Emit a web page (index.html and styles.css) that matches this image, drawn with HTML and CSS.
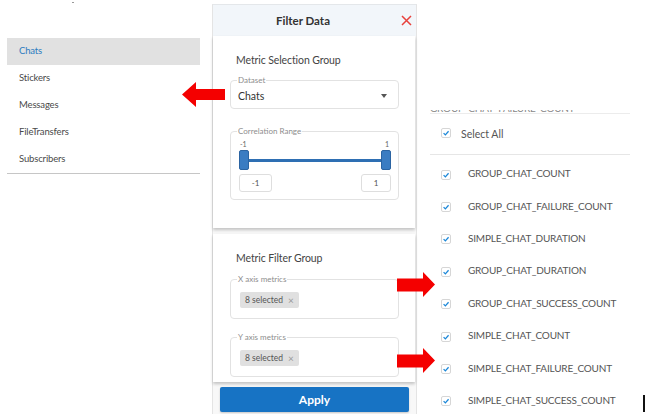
FILE: index.html
```html
<!DOCTYPE html>
<html>
<head>
<meta charset="utf-8">
<link rel="stylesheet" href="styles.css">
</head>
<body>
<div class="page">
  <nav class="menu">
    <div class="menu-item active">Chats</div>
    <div class="menu-item">Stickers</div>
    <div class="menu-item">Messages</div>
    <div class="menu-item">FileTransfers</div>
    <div class="menu-item">Subscribers</div>
  </nav>

  <section class="panel">
    <header class="panel-head">
      <span class="panel-title">Filter Data</span>
      <svg class="close" viewBox="0 0 11 11"><path d="M1 1L10 10M10 1L1 10" stroke="#e8413c" stroke-width="1.5" fill="none"/></svg>
    </header>

    <div class="card card-selection">
      <div class="card-title">Metric Selection Group</div>
      <fieldset class="field">
        <legend>Dataset</legend>
        <div class="select"><span>Chats</span><span class="caret"></span></div>
      </fieldset>
      <fieldset class="field field-range">
        <legend>Correlation Range</legend>
        <div class="range-body">
          <div class="range-labels"><span>-1</span><span>1</span></div>
          <div class="slider"><span class="handle"></span><span class="track"></span><span class="handle"></span></div>
          <div class="range-values"><span class="val val-min">-1</span><span class="val val-max">1</span></div>
        </div>
      </fieldset>
    </div>

    <div class="card card-filter">
      <div class="card-title">Metric Filter Group</div>
      <fieldset class="field field-chips">
        <legend>X axis metrics</legend>
        <span class="chip">8 selected <span class="chip-x">×</span></span>
      </fieldset>
      <fieldset class="field field-chips field-y">
        <legend>Y axis metrics</legend>
        <span class="chip">8 selected <span class="chip-x">×</span></span>
      </fieldset>
    </div>

    <button class="apply">Apply</button>
  </section>

  <section class="checklist">
    <div class="clip"><span>GROUP_CHAT_FAILURE_COUNT</span></div>
    <div class="select-all">
      <span class="cb"><svg viewBox="0 0 10 10"><path d="M2 5.2L4.2 7.3L8.2 2.8" stroke="#1b87d8" stroke-width="1.6" fill="none"/></svg></span>
      <span>Select All</span>
    </div>
    <ul class="items">
      <li><span class="cb"><svg viewBox="0 0 10 10"><path d="M2 5.2L4.2 7.3L8.2 2.8" stroke="#1b87d8" stroke-width="1.6" fill="none"/></svg></span>GROUP_CHAT_COUNT</li>
      <li><span class="cb"><svg viewBox="0 0 10 10"><path d="M2 5.2L4.2 7.3L8.2 2.8" stroke="#1b87d8" stroke-width="1.6" fill="none"/></svg></span>GROUP_CHAT_FAILURE_COUNT</li>
      <li><span class="cb"><svg viewBox="0 0 10 10"><path d="M2 5.2L4.2 7.3L8.2 2.8" stroke="#1b87d8" stroke-width="1.6" fill="none"/></svg></span>SIMPLE_CHAT_DURATION</li>
      <li><span class="cb"><svg viewBox="0 0 10 10"><path d="M2 5.2L4.2 7.3L8.2 2.8" stroke="#1b87d8" stroke-width="1.6" fill="none"/></svg></span>GROUP_CHAT_DURATION</li>
      <li><span class="cb"><svg viewBox="0 0 10 10"><path d="M2 5.2L4.2 7.3L8.2 2.8" stroke="#1b87d8" stroke-width="1.6" fill="none"/></svg></span>GROUP_CHAT_SUCCESS_COUNT</li>
      <li><span class="cb"><svg viewBox="0 0 10 10"><path d="M2 5.2L4.2 7.3L8.2 2.8" stroke="#1b87d8" stroke-width="1.6" fill="none"/></svg></span>SIMPLE_CHAT_COUNT</li>
      <li><span class="cb"><svg viewBox="0 0 10 10"><path d="M2 5.2L4.2 7.3L8.2 2.8" stroke="#1b87d8" stroke-width="1.6" fill="none"/></svg></span>SIMPLE_CHAT_FAILURE_COUNT</li>
      <li><span class="cb"><svg viewBox="0 0 10 10"><path d="M2 5.2L4.2 7.3L8.2 2.8" stroke="#1b87d8" stroke-width="1.6" fill="none"/></svg></span>SIMPLE_CHAT_SUCCESS_COUNT</li>
    </ul>
  </section>
</div>

<svg class="arrow arrow-left" viewBox="0 0 43 25"><polygon points="0,12.5 14,0 14,7 43,7 43,18 14,18 14,25" fill="#f40000"/></svg>
<svg class="arrow arrow-right arrow-r1" viewBox="0 0 38 25"><polygon points="0,6.5 26,6.5 26,0 38,12.5 26,25 26,19.5 0,19.5" fill="#f40000"/></svg>
<svg class="arrow arrow-right arrow-r2" viewBox="0 0 38 25"><polygon points="0,6.5 26,6.5 26,0 38,12.5 26,25 26,19.5 0,19.5" fill="#f40000"/></svg>
<span class="speck"></span>
<span class="cursor-bar"></span>
</body>
</html>
```
FILE: styles.css
```css
* { box-sizing: border-box; }
html, body { margin: 0; padding: 0; }
body {
  width: 645px;
  height: 414px;
  overflow: hidden;
  background: #fff;
  position: relative;
  font-family: Lato, "Open Sans", sans-serif;
  color: #444;
}
.page { display: flex; align-items: flex-start; }

/* left menu */
.menu {
  margin: 38px 0 0 7px;
  width: 193px;
  border-bottom: 1px solid #c6c6c6;
}
.menu-item {
  height: 27px;
  line-height: 25px;
  padding-left: 12px;
  font-size: 9.5px;
  letter-spacing: -0.15px;
  color: #4a4a4a;
}
.menu-item.active { background: #e1e1e1; color: #2c7cc0; }

/* filter panel */
.panel {
  margin: 4px 0 0 12px;
  width: 205px;
  height: 412px;
  background: #f8f8f8;
  border-top: 1px solid #e4e7ea;
  border-left: 1px solid #e4e4e4;
  border-right: 1px solid #e4e4e4;
  display: flex;
  flex-direction: column;
}
.panel-head {
  height: 31px;
  flex: none;
  background: #f2f6fa;
  display: flex;
  align-items: center;
}
.panel-title {
  flex: 1;
  text-align: center;
  padding-right: 8px;
  font-weight: 700;
  font-size: 11.5px;
  color: #333;
}
.close { width: 11px; height: 11px; margin-right: 4px; }

.card {
  background: #fff;
  margin-right: 1px;
  padding: 16px 16px 0 17px;
  box-shadow: 0 2px 3px rgba(0, 0, 0, 0.22);
  flex: none;
}
.card-selection { height: 192px; }
.card-filter { margin-top: 6px; padding-bottom: 5px; }
.card-title {
  padding-left: 6px;
  font-size: 10.5px;
  letter-spacing: -0.1px;
  line-height: 16px;
  color: #444;
}

.field {
  margin: 7px 0 0;
  padding: 0 6px;
  border: 1px solid #e2e2e2;
  border-radius: 4px;
  min-width: 0;
}
.field legend {
  padding: 0 1px;
  font-size: 8px;
  line-height: 10px;
  color: #8d8d8d;
}
.select {
  display: flex;
  justify-content: space-between;
  align-items: center;
  padding: 3px 0 4px 1px;
  line-height: 16px;
  font-size: 10.5px;
  color: #333;
}
.caret {
  width: 0; height: 0;
  margin-right: 5px;
  border-left: 3.5px solid transparent;
  border-right: 3.5px solid transparent;
  border-top: 4px solid #555;
}

.field-range { margin-top: 17px; }
.range-body { padding: 4px 1px 7px 2px; }
.range-labels {
  display: flex;
  justify-content: space-between;
  font-size: 7px;
  line-height: 8px;
  color: #666;
  padding: 0 2px 0 1px;
}
.slider {
  margin-top: 2px;
  display: flex;
  align-items: center;
  height: 20px;
}
.handle {
  width: 10px;
  height: 20px;
  background: #3a7cc2;
  border: 1px solid #2b64a2;
  border-radius: 2px;
  flex: none;
}
.track { flex: 1; height: 3px; background: #2e6fb3; }
.range-values {
  margin-top: 4px;
  display: flex;
  justify-content: space-between;
}
.val {
  height: 18px;
  border: 1px solid #dedede;
  border-radius: 3px;
  font-size: 8px;
  line-height: 16px;
  text-align: center;
  color: #555;
  background: #fff;
}
.val-min { width: 33px; }
.val-max { width: 30px; }

.field-chips { margin-top: 8px; padding-bottom: 10px; }
.field-y { margin-top: 13px; }
.chip {
  display: inline-flex;
  align-items: center;
  gap: 5px;
  height: 16px;
  margin: 8px 0 0 3px;
  padding: 0 5px 0 5px;
  background: #e0e0e0;
  border-radius: 2px;
  font-size: 8.5px;
  color: #555;
}
.chip-x { font-size: 10px; color: #999; }

.apply {
  margin: 5px 7px 0;
  height: 25px;
  flex: none;
  background: #1773c4;
  color: #fff;
  border: none;
  border-radius: 2px;
  font-family: inherit;
  font-weight: 700;
  font-size: 12px;
  box-shadow: 0 1px 2px rgba(0, 0, 0, 0.2);
}

/* right checklist */
.checklist { margin: 110px 0 0 13px; width: 200px; }
.clip {
  height: 4px;
  overflow: hidden;
  display: flex;
  align-items: flex-end;
  font-size: 10px;
  line-height: 9px;
  letter-spacing: -0.2px;
  color: #888;
  border-bottom: 1px solid #ececec;
}
.select-all {
  height: 41px;
  display: flex;
  align-items: center;
  gap: 10px;
  padding-left: 11px;
  font-size: 10.5px;
  color: #555;
  border-bottom: 1px solid #e6e6e6;
}
.items { list-style: none; margin: 2px 0 0; padding: 0; }
.items li {
  height: 32.4px;
  display: flex;
  align-items: center;
  gap: 17px;
  padding-left: 11px;
  font-size: 10px;
  letter-spacing: -0.2px;
  color: #555;
}
.cb {
  width: 10px;
  height: 10px;
  flex: none;
  border: 1px solid #d6d6d6;
  border-radius: 2px;
  background: #fff;
  display: flex;
  margin-top: 3px;
}
.select-all .cb { margin-top: -2px; }
.cb svg { width: 8px; height: 8px; }

/* overlays */
.arrow { position: absolute; }
.arrow-left { left: 182px; top: 82px; width: 43px; height: 25px; }
.arrow-right { left: 397px; width: 38px; height: 25px; }
.arrow-r1 { top: 272px; }
.arrow-r2 { top: 348px; }
.speck { position: absolute; left: 72px; top: 2px; width: 2px; height: 1px; background: #999; }
.cursor-bar { position: absolute; left: 643px; top: 395px; width: 2px; height: 17px; background: #111; }
```
